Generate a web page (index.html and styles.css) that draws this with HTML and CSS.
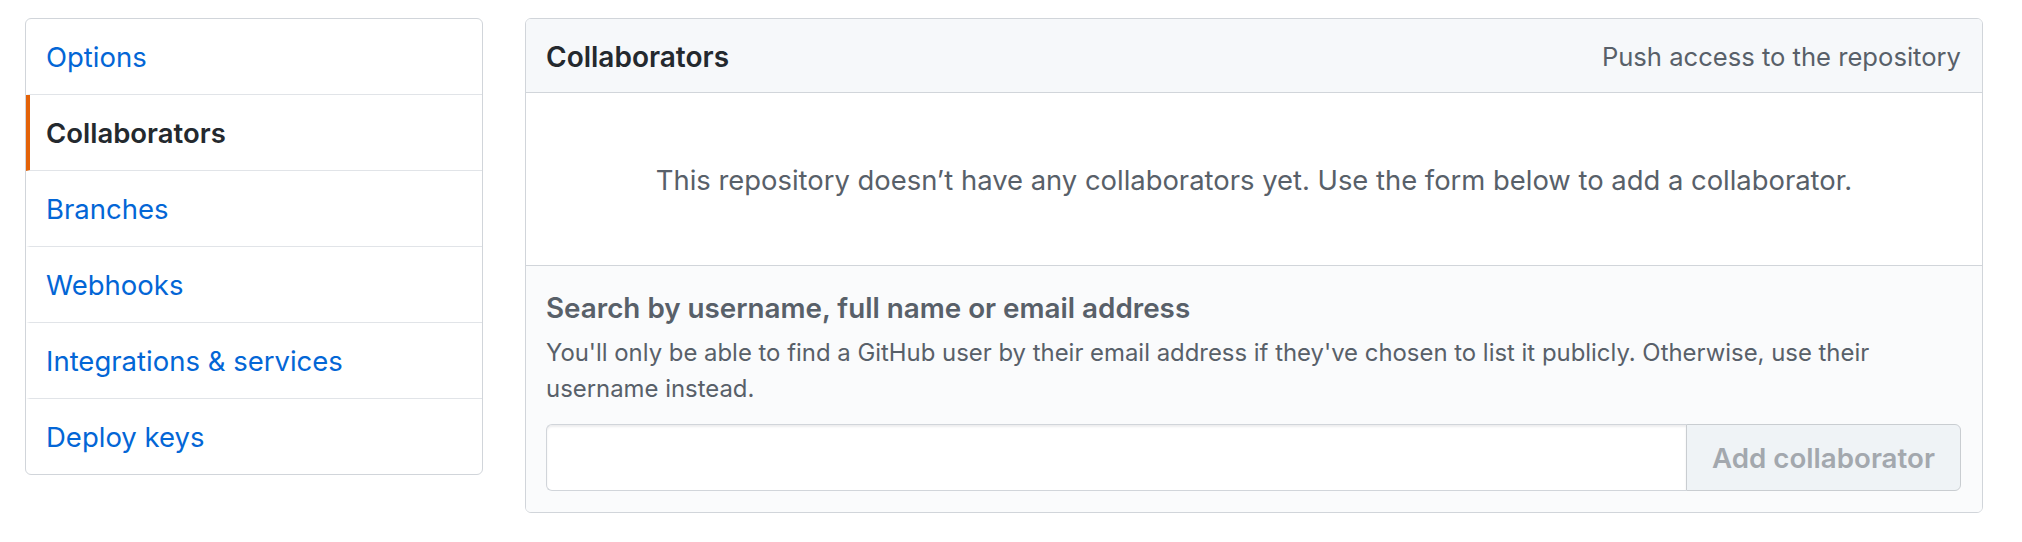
FILE: index.html
```html
<!DOCTYPE html>
<html lang="en">
<head>
<meta charset="utf-8">
<title>Collaborators</title>
<link rel="stylesheet" href="styles.css">
</head>
<body>
<div class="page">
  <nav class="menu">
    <a class="menu-item" href="#">Options</a>
    <a class="menu-item selected" href="#">Collaborators</a>
    <a class="menu-item" href="#">Branches</a>
    <a class="menu-item" href="#">Webhooks</a>
    <a class="menu-item" href="#">Integrations &amp; services</a>
    <a class="menu-item" href="#">Deploy keys</a>
  </nav>
  <section class="panel">
    <header class="panel-header">
      <h3 class="panel-title">Collaborators</h3>
      <span class="panel-note">Push access to the repository</span>
    </header>
    <div class="blank">
      <p class="blank-text">This repository doesn’t have any collaborators yet. Use the form below to add a collaborator.</p>
    </div>
    <form class="add-form">
      <label class="form-label" for="search">Search by username, full name or email address</label>
      <p class="form-note">You'll only be able to find a GitHub user by their email address if they've chosen to list it publicly. Otherwise, use their username instead.</p>
      <div class="input-group">
        <input class="form-input" id="search" type="text" aria-label="Search">
        <button class="btn" type="button" disabled>Add collaborator</button>
      </div>
    </form>
  </section>
</div>
</body>
</html>
```
FILE: styles.css
```css
* { box-sizing: border-box; }
html, body { margin: 0; background: #fff; }
body {
  font-family: Inter, "Liberation Sans", sans-serif;
  color: #24292e;
}
.page {
  display: flex;
  align-items: flex-start;
  gap: 42px;
  padding: 18px 0 0 25px;
}

/* side menu */
.menu {
  width: 458px;
  flex: none;
  border: 1px solid #d1d5da;
  border-radius: 6px;
  background: #fff;
  overflow: hidden;
}
.menu-item {
  display: block;
  height: 76px;
  line-height: 73px;
  padding: 2px 0 0 16px;
  border-left: 4px solid transparent;
  border-bottom: 1px solid #e1e4e8;
  color: #0366d6;
  font-size: 27.5px;
  text-decoration: none;
}
.menu-item:last-child { border-bottom: 0; height: 75px; }
.menu-item.selected {
  border-left-color: #e36209;
  color: #24292e;
  font-weight: 600;
}

/* main panel */
.panel {
  width: 1458px;
  flex: none;
  border: 1px solid #d1d5da;
  border-radius: 6px;
  overflow: hidden;
}
.panel-header {
  height: 74px;
  display: flex;
  align-items: center;
  justify-content: space-between;
  padding: 2px 21px 0 20px;
  background: #f6f8fa;
  border-bottom: 1px solid #d1d5da;
}
.panel-title {
  margin: 0;
  font-size: 28px;
  font-weight: 600;
  color: #24292e;
}
.panel-note {
  font-size: 25.6px;
  color: #586069;
}
.blank {
  height: 173px;
  display: flex;
  align-items: center;
  justify-content: center;
  padding-top: 2px;
  border-bottom: 1px solid #d1d5da;
  background: #fff;
}
.blank-text {
  margin: 0;
  font-size: 27.4px;
  color: #586069;
}
.add-form {
  display: block;
  margin: 0;
  padding: 21px 21px 21px 20px;
  background: #fafbfc;
}
.form-label {
  display: block;
  font-size: 27.8px;
  line-height: 42px;
  font-weight: 600;
  color: #586069;
}
.form-note {
  margin: 6px 0 17px;
  font-size: 23.9px;
  line-height: 36px;
  color: #586069;
}
.input-group {
  display: flex;
  height: 67px;
}
.form-input {
  flex: 1;
  min-width: 0;
  height: 67px;
  margin: 0;
  border: 1px solid #d1d5da;
  border-right: 0;
  border-radius: 6px 0 0 6px;
  background: #fff;
  box-shadow: inset 0 2px 2px rgba(27, 31, 35, 0.075);
  font: inherit;
  font-size: 28px;
  padding: 0 16px;
  outline: none;
}
.btn {
  width: 275px;
  height: 67px;
  margin: 0;
  border: 1px solid #c9cdd1;
  border-radius: 0 6px 6px 0;
  background: #eff3f6;
  color: #a3a8ae;
  font-family: inherit;
  font-size: 27.7px;
  font-weight: 600;
  padding: 0;
  cursor: default;
}
```
